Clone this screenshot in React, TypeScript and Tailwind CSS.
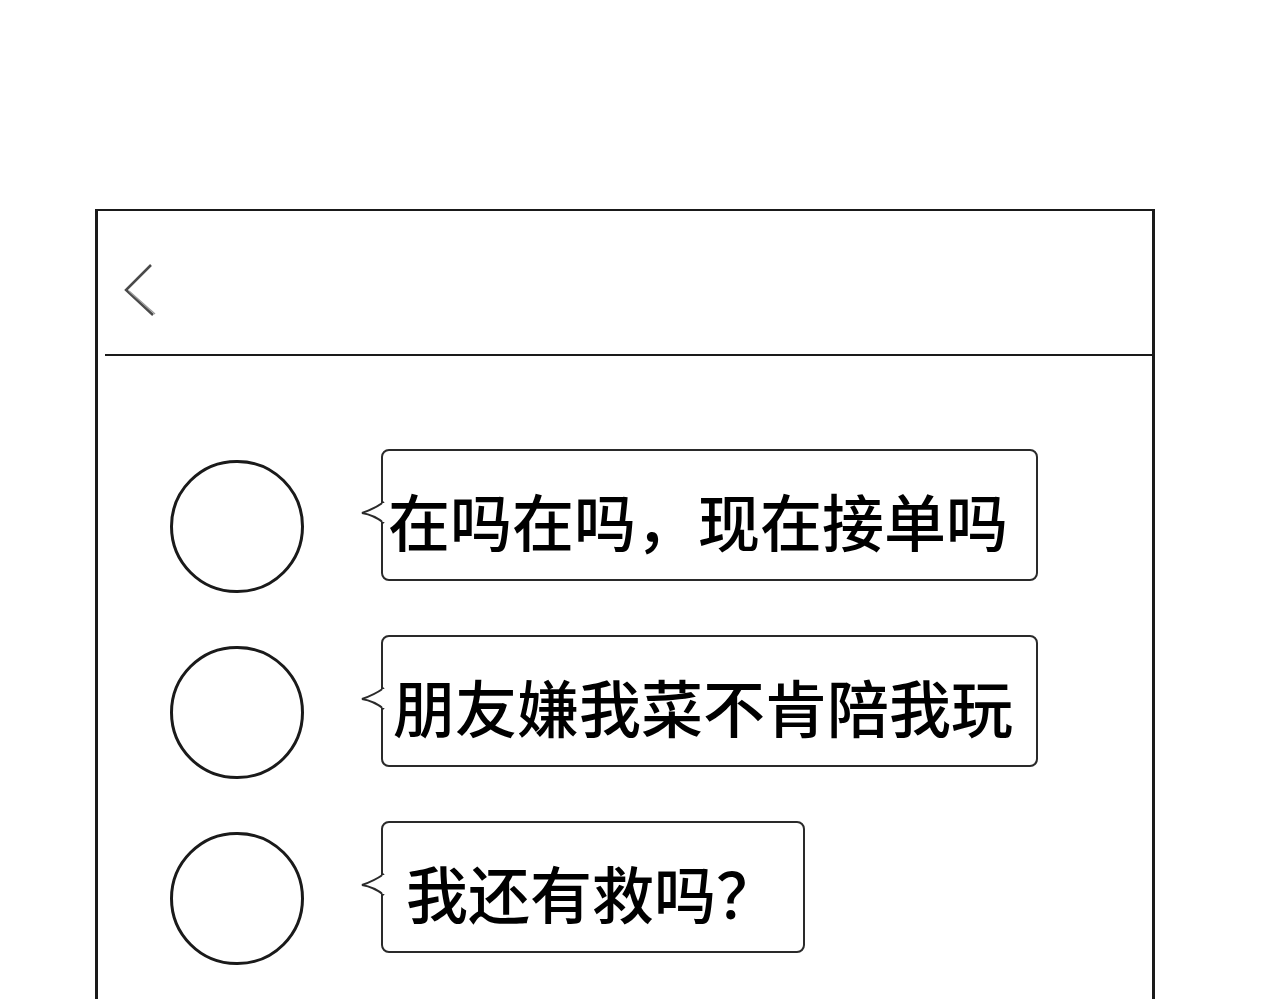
import React from "react";

const rows = [
  { text: "在吗在吗，现在接单吗", w: "w-[657px]", pl: "pl-[5px]" },
  { text: "朋友嫌我菜不肯陪我玩", w: "w-[657px]", pl: "pl-[10px]" },
  { text: "我还有救吗？", w: "w-[424px]", pl: "pl-[23px]" },
];

function Bubble({ text, w, pl }: { text: string; w: string; pl: string }) {
  return (
    <div
      className={`relative ${w} h-[132px] rounded-[8px] border-2 border-[#2a2a2a] bg-white flex items-center ${pl} pt-[10px]`}
    >
      <svg
        className="absolute left-[-23px] top-[50px]"
        width="26"
        height="24"
        viewBox="0 0 26 24"
      >
        <path d="M24 1 Q14 8 2 12 Q14 14 24 22" fill="white" stroke="#2a2a2a" strokeWidth="2" />
        <rect x="22.5" y="2" width="4" height="19" fill="white" />
      </svg>
      <span
        className="text-[62px] leading-[62px] font-medium text-black whitespace-nowrap"
        style={{ fontFamily: '"Noto Sans CJK SC", "Noto Sans", sans-serif' }}
      >
        {text}
      </span>
    </div>
  );
}

export default function App() {
  return (
    <div className="w-[1280px] h-[999px] bg-white overflow-hidden">
      <div className="ml-[95px] mt-[209px] w-[1060px] h-[800px] border-l-[3px] border-r-[3px] border-t-2 border-[#1a1a1a] flex flex-col">
        <div className="h-[143px] flex items-center pl-[24px]">
          <svg width="36" height="56" viewBox="0 0 36 56" className="mt-[16px]">
            <path d="M29 2 L4 27 L31 52" fill="none" stroke="#4a4a4a" strokeWidth="2.5" />
            <path d="M7 28 L33 51" fill="none" stroke="#999" strokeWidth="1.3" />
          </svg>
        </div>
        <div className="ml-[7px] h-[2px] bg-[#1a1a1a]" />
        <div className="flex flex-col gap-[42px] pt-[93px]">
          {rows.map((r, i) => (
            <div key={i} className="flex items-start">
              <div className="ml-[72px] mt-[11px] w-[134px] h-[133px] rounded-full border-[3px] border-[#1a1a1a]" />
              <div className="ml-[77px]">
                <Bubble text={r.text} w={r.w} pl={r.pl} />
              </div>
            </div>
          ))}
        </div>
      </div>
    </div>
  );
}
